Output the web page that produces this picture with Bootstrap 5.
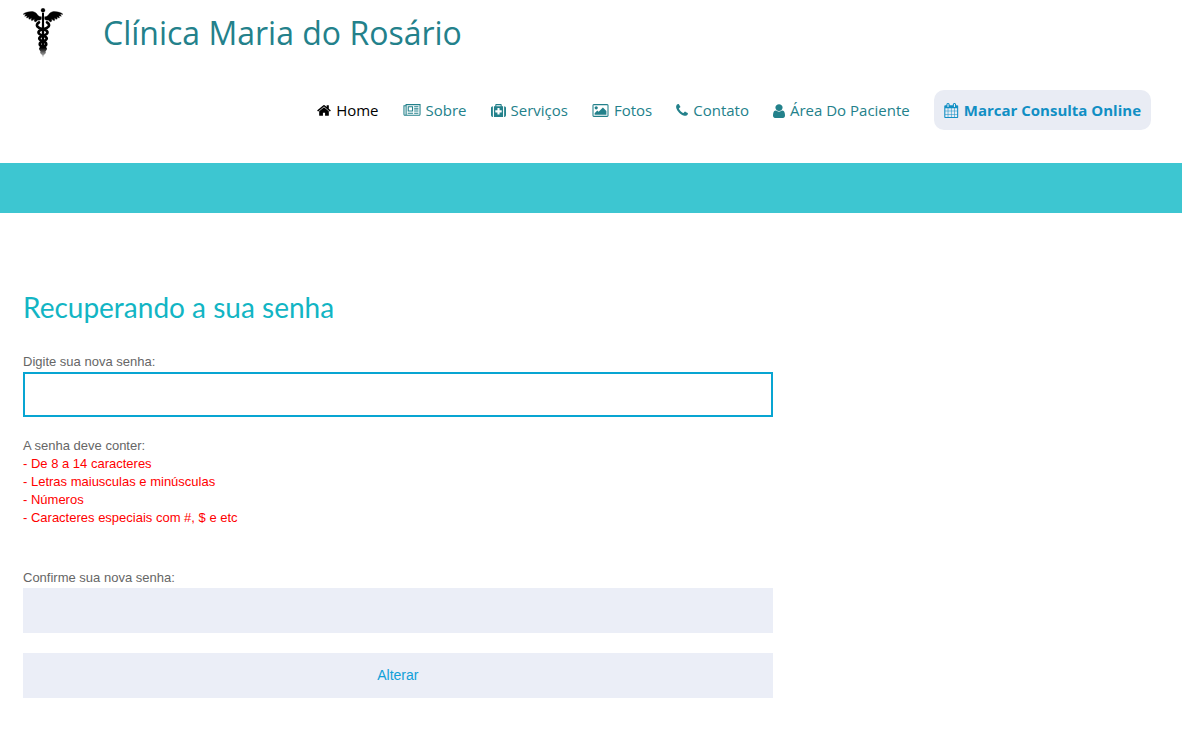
<!DOCTYPE html>
<html lang="pt-BR">
<head>
<meta charset="utf-8">
<meta name="viewport" content="width=device-width, initial-scale=1">
<title>Clínica Maria do Rosário</title>
<link href="https://cdn.jsdelivr.net/npm/bootstrap@5.3.0/dist/css/bootstrap.min.css" rel="stylesheet">
<style>
body { font-family: "Liberation Sans", Arial, sans-serif; font-size: 13px; line-height: 19px; color: #666; background: #fff; }
.page-gutter { padding-left: 23px; padding-right: 31px; }
.brand-link { gap: 40px; padding-top: 8px; color: #23818b; font: 32px/50px "Open Sans", sans-serif; text-decoration: none; }
.site-menu { gap: 24px; padding-top: 32px; padding-bottom: 33px; font: 15px/20px "Open Sans", sans-serif; }
.site-menu a { display: flex; align-items: center; gap: 5px; color: #23818b; text-decoration: none; white-space: nowrap; }
.site-menu a.active { color: #000; }
.site-menu a.booking { padding: 10px; border-radius: 10px; background: #e9ecf4; color: #118fc4; font-weight: 700; }
.site-menu svg { height: 15px; fill: currentColor; flex: none; }
.banner-strip { height: 50px; background: #3dc6d1; }
.reset-area { padding: 76px 23px 31px; }
.reset-area h1 { margin-bottom: 27px; color: #12b5c4; font: 28px/36px Lato, sans-serif; }
.reset-form { width: 66%; }
.reset-form label { display: block; margin-bottom: 1px; }
.field { height: 45px; border: 2px solid #ebeef7; border-radius: 0; background: #ebeef7; }
.field:focus { border-color: #08a5d2; background: #fff; box-shadow: none; outline: 0; }
.btn-change { height: 45px; margin-top: 20px; border: 0; border-radius: 0; background: #ebeef7; color: #10a0d8; font-size: 14px; }
.btn-change:hover { background: #dfe4f2; color: #10a0d8; }
.rules { margin: 19px 0 41px; }
.rules ul { color: #f00; line-height: 18px; }
</style>
</head>
<body>
<header>
  <div class="page-gutter">
    <a class="brand-link d-flex" href="#">
      <svg width="40" height="50" viewBox="24 24 120 150" aria-hidden="true">
        <defs><linearGradient id="fade" gradientUnits="userSpaceOnUse" x1="0" y1="24" x2="0" y2="174"><stop offset=".8" stop-color="#000"/><stop offset=".9" stop-color="#777"/><stop offset="1" stop-color="#ccc"/></linearGradient></defs>
        <g fill="#000" stroke="#000" stroke-width="1">
          <path d="M79 50C70 51 69 46 64 40C57 33 46 34 35 37Q29 38 24 43Q29 43 33 43Q30 46 29 49Q34 48 37 47Q34 51 35 54Q40 53 43 50Q40 54 42 58Q47 57 50 53Q47 58 50 62Q55 61 58 56Q56 62 60 66Q66 64 68 60Q74 62 79 58Z"/>
          <path d="M89 50C98 51 99 46 104 40C111 33 122 34 133 37Q139 38 144 43Q139 43 135 43Q138 46 139 49Q134 48 131 47Q134 51 133 54Q128 53 125 50Q128 54 126 58Q121 57 118 53Q121 58 118 62Q113 61 110 56Q112 62 108 66Q102 64 100 60Q94 62 89 58Z"/>
          <circle cx="84" cy="31" r="6"/>
        </g>
        <path d="M81 38H87L88 158L84 173L80 158Z" fill="url(#fade)"/>
        <g fill="none" stroke="url(#fade)" stroke-width="8" stroke-linecap="round">
          <path d="M72 67C59 76 68 84 84 88C104 94 100 102 84 107C68 112 70 119 84 124C97 129 97 136 84 140C72 145 75 150 84 153C91 156 89 159 84 161"/>
          <path d="M96 67C109 76 100 84 84 88C64 94 68 102 84 107C100 112 98 119 84 124C71 129 71 136 84 140C96 145 93 150 84 153C77 156 79 159 84 161"/>
        </g>
      </svg>
      <span>Clínica Maria do Rosário</span>
    </a>
    <nav class="site-menu d-flex flex-wrap justify-content-end align-items-center" aria-label="Principal">
      <a class="active" aria-current="page" href="#"><svg width="14" viewBox="64 0 1664 1792" aria-hidden="true"><path d="M1472 992v480q0 26-19 45t-45 19h-384v-384h-256v384h-384q-26 0-45-19t-19-45v-480q0-1 .5-3t.5-3l575-474 575 474q1 2 1 6zm223-69l-62 74q-8 9-21 11h-3q-13 0-21-7l-692-577-692 577q-12 8-24 7-13-2-21-11l-62-74q-8-10-7-23.5t11-21.5l719-599q32-26 76-26t76 26l244 204v-195q0-14 9-23t23-9h192q14 0 23 9t9 23v408l219 182q10 8 11 21.5t-7 23.5z"/></svg>Home</a>
      <a href="#"><svg width="18" viewBox="0 0 2048 1792" aria-hidden="true"><path d="M1024 512h-384v384h384v-384zm128 640v128h-640v-128h640zm0-768v640h-640v-640h640zm640 768v128h-512v-128h512zm0-256v128h-512v-128h512zm0-256v128h-512v-128h512zm0-256v128h-512v-128h512zm-1536 960v-960h-128v960q0 26 19 45t45 19 45-19 19-45zm1664 0v-1088h-1536v1088q0 33-11 64h1483q26 0 45-19t19-45zm128-1216v1216q0 80-56 136t-136 56h-1664q-80 0-136-56t-56-136v-1088h256v-128h1792z"/></svg>Sobre</a>
      <a href="#"><svg width="15" viewBox="0 0 1792 1792" aria-hidden="true"><path d="M1280 1088v-192q0-14-9-23t-23-9h-224v-224q0-14-9-23t-23-9h-192q-14 0-23 9t-9 23v224h-224q-14 0-23 9t-9 23v192q0 14 9 23t23 9h224v224q0 14 9 23t23 9h192q14 0 23-9t9-23v-224h224q14 0 23-9t9-23zm-640-704h512v-128h-512v128zm-416 0v1280q-92 0-158-66t-66-158v-832q0-92 66-158t158-66zm1216 0v1280h-1088v-1280h160v-160q0-40 28-68t68-28h576q40 0 68 28t28 68v160h160zm352 224v832q0 92-66 158t-158 66v-1280q92 0 158 66t66 158z"/></svg>Serviços</a>
      <a href="#"><svg width="17" viewBox="0 0 1920 1792" aria-hidden="true"><path d="M640 576q0 80-56 136t-136 56-136-56-56-136 56-136 136-56 136 56 56 136zm1024 384v448h-1408v-192l320-320 160 160 512-512zm96-704h-1600q-13 0-22.5 9.5t-9.5 22.5v1216q0 13 9.5 22.5t22.5 9.5h1600q13 0 22.5-9.5t9.5-22.5v-1216q0-13-9.5-22.5t-22.5-9.5zm160 32v1216q0 66-47 113t-113 47h-1600q-66 0-113-47t-47-113v-1216q0-66 47-113t113-47h1600q66 0 113 47t47 113z"/></svg>Fotos</a>
      <a href="#"><svg width="12" viewBox="192 0 1408 1792" aria-hidden="true"><path d="M1600 1240q0 27-10 70.5t-21 68.5q-21 50-122 106-94 51-186 51-27 0-53-3.5t-57.5-12.5-47-14.5-55.5-20.5-49-18q-98-35-175-83-127-79-264-216t-216-264q-48-77-83-175-3-9-18-49t-20.5-55.5-14.5-47-12.5-57.5-3.5-53q0-92 51-186 56-101 106-122 25-11 68.5-21t70.5-10q14 0 21 3 18 6 53 76 11 19 30 54t35 63.5 31 53.5q3 4 17.5 25t21.5 35.5 7 28.5q0 20-28.5 50t-62 55-62 53-28.5 46q0 9 5 22.5t8.5 20.5 14 24 11.5 19q76 137 174 235t235 174q2 1 19 11.5t24 14 20.5 8.5 22.5 5q18 0 46-28.5t53-62 55-62 50-28.5q14 0 28.5 7t35.5 21.5 25 17.5q25 15 53.5 31t63.5 35 54 30q70 35 76 53 3 7 3 21z"/></svg>Contato</a>
      <a href="#"><svg width="12" viewBox="256 0 1280 1664" preserveAspectRatio="none" aria-hidden="true"><path d="M1536 1399q0 109-62.5 187t-150.5 78h-854q-88 0-150.5-78t-62.5-187q0-85 8.5-160.5t31.5-152 58.5-131 94-89 134.5-34.5q131 128 313 128t313-128q76 0 134.5 34.5t94 89 58.5 131 31.5 152 8.5 160.5zm-256-887q0 159-112.5 271.5t-271.5 112.5-271.5-112.5-112.5-271.5 112.5-271.5 271.5-112.5 271.5 112.5 112.5 271.5z"/></svg>Área Do Paciente</a>
      <a class="booking" href="#"><svg width="15" viewBox="64 0 1728 1792" aria-hidden="true"><path d="M192 1664h288v-288h-288v288zm352 0h320v-288h-320v288zm-352-352h288v-320h-288v320zm352 0h320v-320h-320v320zm-352-384h288v-288h-288v288zm736 736h320v-288h-320v288zm-384-736h320v-288h-320v288zm768 736h288v-288h-288v288zm-384-352h320v-320h-320v320zm-352-864v-288q0-13-9.5-22.5t-22.5-9.5h-64q-13 0-22.5 9.5t-9.5 22.5v288q0 13 9.5 22.5t22.5 9.5h64q13 0 22.5-9.5t9.5-22.5zm736 864h288v-320h-288v320zm-384-384h320v-288h-320v288zm384 0h288v-288h-288v288zm32-480v-288q0-13-9.5-22.5t-22.5-9.5h-64q-13 0-22.5 9.5t-9.5 22.5v288q0 13 9.5 22.5t22.5 9.5h64q13 0 22.5-9.5t9.5-22.5zm384-64v1280q0 52-38 90t-90 38h-1408q-52 0-90-38t-38-90v-1280q0-52 38-90t90-38h128v-96q0-66 47-113t113-47h64q66 0 113 47t47 113v96h384v-96q0-66 47-113t113-47h64q66 0 113 47t47 113v96h128q52 0 90 38t38 90z"/></svg>Marcar Consulta Online</a>
    </nav>
  </div>
  <div class="banner-strip"></div>
</header>
<main class="reset-area">
  <h1>Recuperando a sua senha</h1>
  <form class="reset-form">
    <label for="nova">Digite sua nova senha:</label>
    <input class="form-control field" type="password" id="nova" autofocus>
    <div class="rules">
      <div>A senha deve conter:</div>
      <ul class="list-unstyled mb-0">
        <li>- De 8 a 14 caracteres</li>
        <li>- Letras maiusculas e minúsculas</li>
        <li>- Números</li>
        <li>- Caracteres especiais com #, $ e etc</li>
      </ul>
    </div>
    <label for="confirma">Confirme sua nova senha:</label>
    <input class="form-control field" type="password" id="confirma">
    <button class="btn btn-change w-100" type="submit">Alterar</button>
  </form>
</main>
<script src="https://cdn.jsdelivr.net/npm/bootstrap@5.3.0/dist/js/bootstrap.bundle.min.js"></script>
</body>
</html>
